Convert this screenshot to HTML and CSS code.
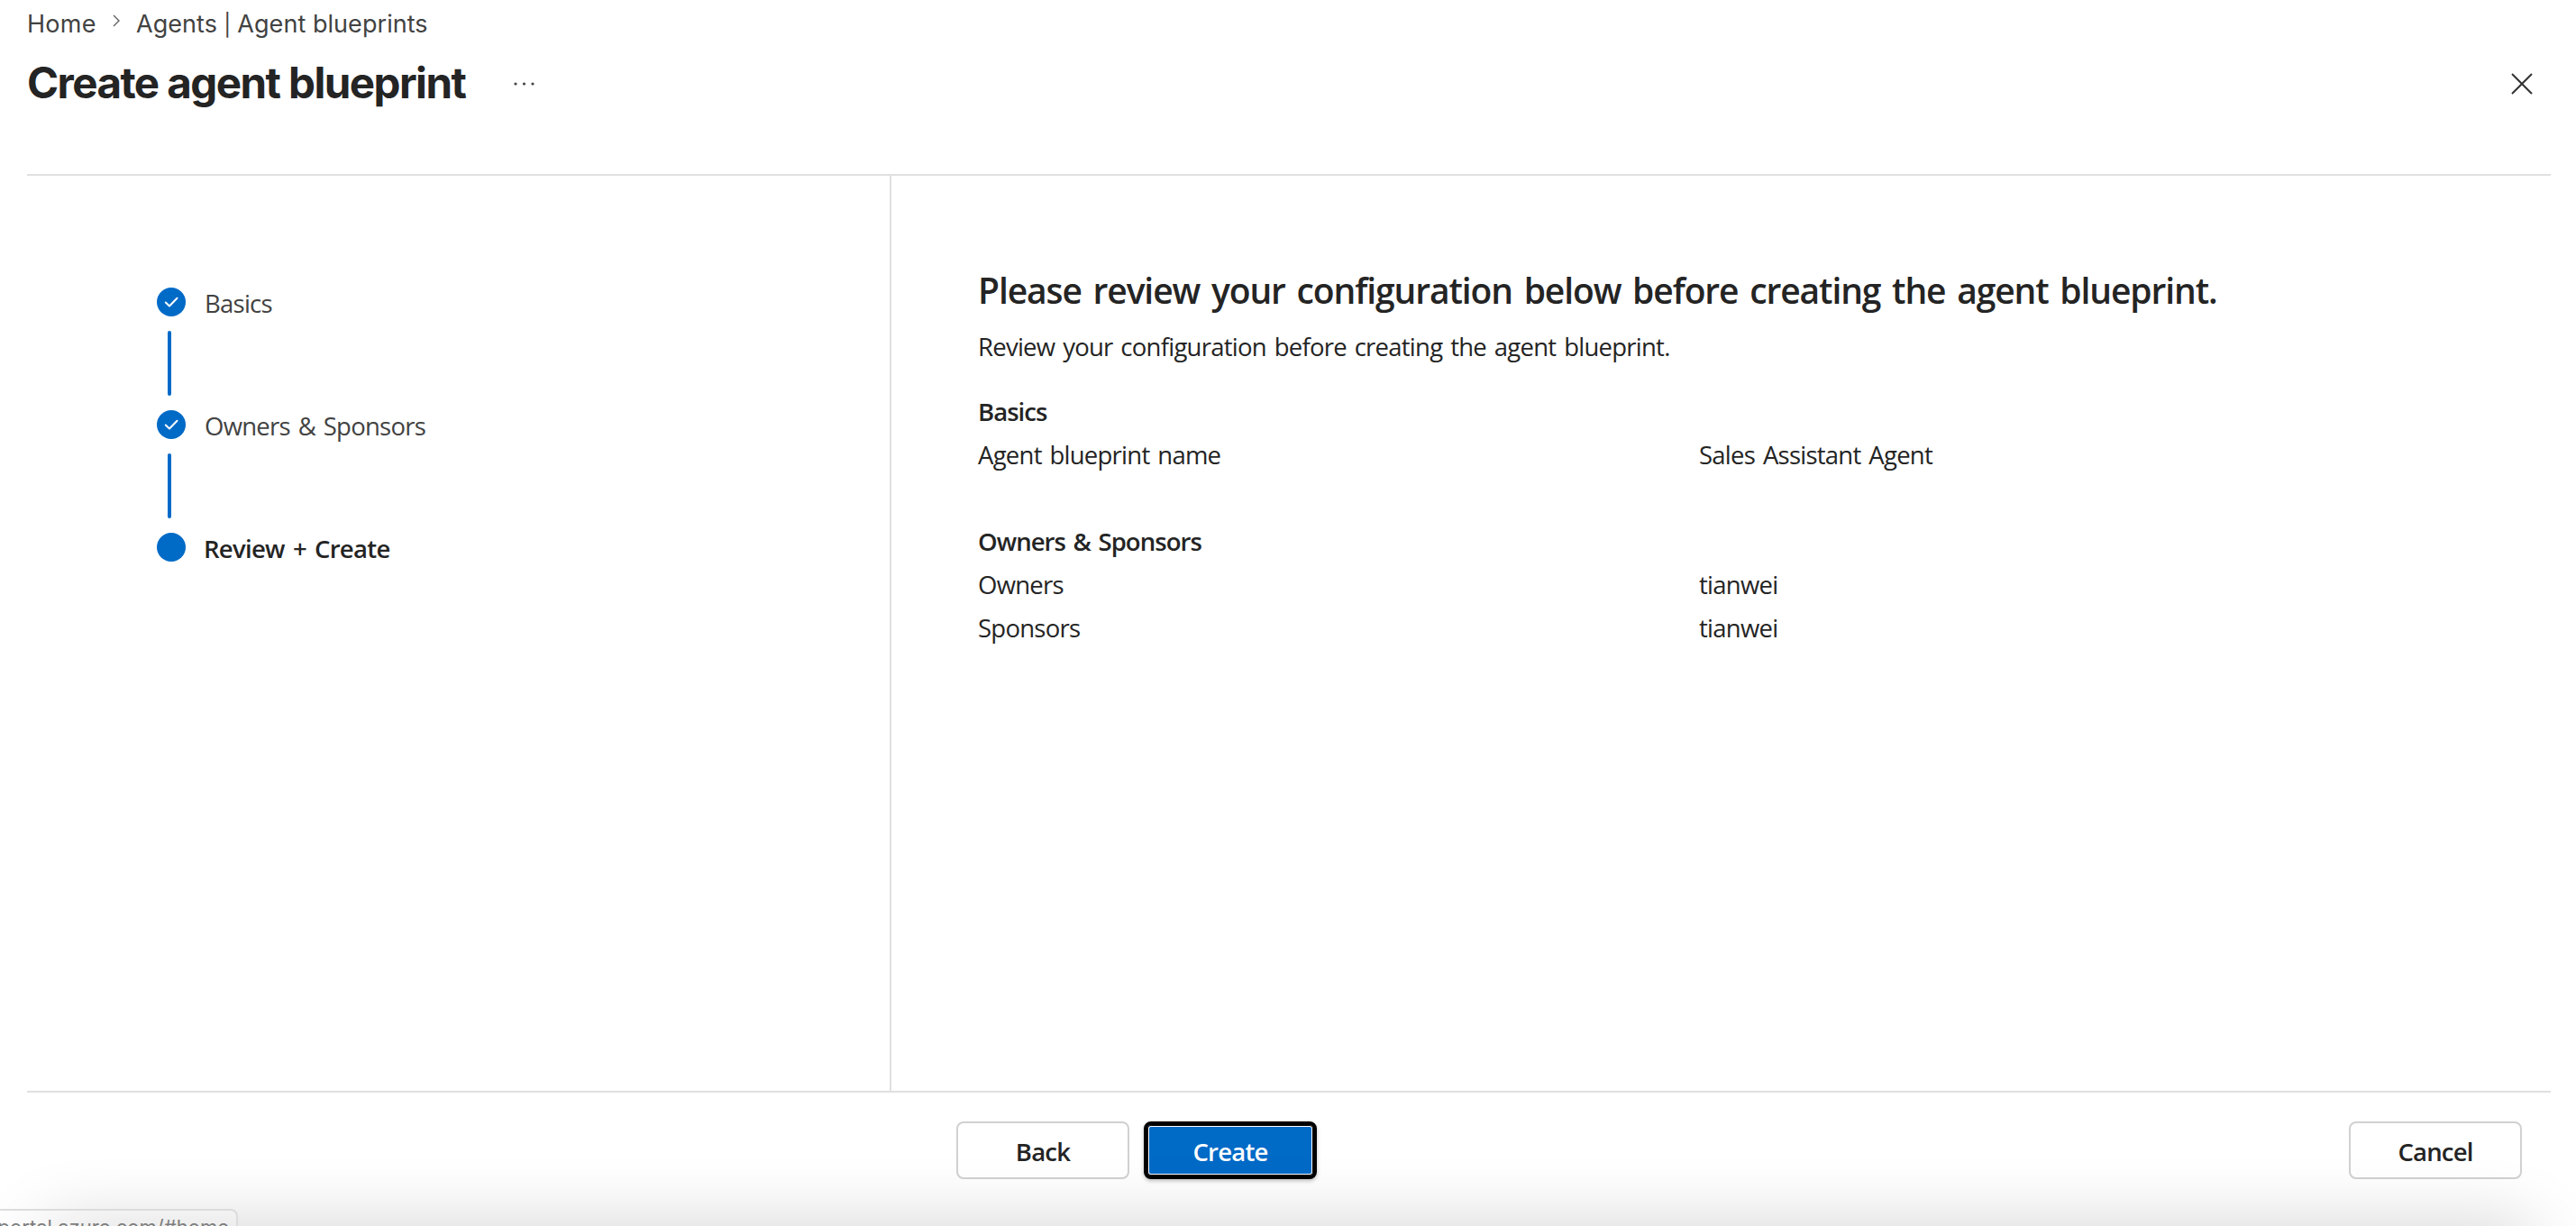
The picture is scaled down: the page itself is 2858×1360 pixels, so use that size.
FILE: index.html
```
<!DOCTYPE html>
<html lang="en">

<head>
    <meta charset="UTF-8">
    <meta name="viewport" content="width=device-width, initial-scale=1.0">
    <title>Create agent blueprint</title>
    <link rel="stylesheet" href="styles.css">
</head>

<body>
    <div class="page">
        <header class="header">
            <nav class="breadcrumb">
                <a href="#home" class="crumb-home">Home</a>
                <svg class="chevron" viewBox="0 0 8 14"><path d="M1 1l6 6-6 6" /></svg>
                <a href="#agents" class="crumb-agents">Agents <span class="pipe">|</span> Agent blueprints</a>
            </nav>
            <div class="title-row">
                <h1>Create agent blueprint</h1>
                <svg class="more" viewBox="0 0 24 4">
                    <circle cx="2" cy="2" r="1.6" />
                    <circle cx="11.5" cy="2" r="1.6" />
                    <circle cx="21" cy="2" r="1.6" />
                </svg>
                <svg class="close" viewBox="0 0 24 24"><path d="M1 1l22 22M23 1L1 23" /></svg>
            </div>
        </header>

        <main class="wizard">
            <aside class="steps">
                <div class="step">
                    <span class="dot"><svg viewBox="0 0 32 32"><path d="M9.8 16.5l4.2 4 8.5-8.8" /></svg></span>
                    <span class="step-label">Basics</span>
                </div>
                <div class="connector"></div>
                <div class="step">
                    <span class="dot"><svg viewBox="0 0 32 32"><path d="M9.8 16.5l4.2 4 8.5-8.8" /></svg></span>
                    <span class="step-label">Owners &amp; Sponsors</span>
                </div>
                <div class="connector"></div>
                <div class="step current">
                    <span class="dot"></span>
                    <span class="step-label">Review + Create</span>
                </div>
            </aside>

            <section class="review">
                <h2>Please review your configuration below before creating the agent blueprint.</h2>
                <p class="intro">Review your configuration before creating the agent blueprint.</p>

                <h3>Basics</h3>
                <div class="row">
                    <span>Agent blueprint name</span>
                    <span>Sales Assistant Agent</span>
                </div>

                <h3 class="second">Owners &amp; Sponsors</h3>
                <div class="row">
                    <span>Owners</span>
                    <span>tianwei</span>
                </div>
                <div class="row">
                    <span>Sponsors</span>
                    <span>tianwei</span>
                </div>
            </section>
        </main>

        <footer class="footer">
            <button class="btn">Back</button>
            <button class="btn primary">Create</button>
            <button class="btn cancel">Cancel</button>
        </footer>
    </div>

    <div class="bottom-shade"></div>
    <div class="status-bar">https://portal.azure.com/#home</div>
</body>

</html>
```

FILE: styles.css
```
* {
    box-sizing: border-box;
}

body {
    margin: 0;
    height: 1360px;
    position: relative;
    overflow: hidden;
    background-color: #fff;
    color: #242424;
    font-family: "Segoe UI", "Open Sans", "Noto Sans", sans-serif;
    font-size: 27.5px;
    letter-spacing: -0.75px;
    word-spacing: 2.4px;
}

.page {
    display: flex;
    flex-direction: column;
    height: 1360px;
    padding: 0 28px 0 30px;
}

.header {
    height: 193px;
    font-family: Inter, sans-serif;
    word-spacing: 0;
}

.breadcrumb {
    display: flex;
    align-items: center;
    height: 52px;
    font-size: 27px;
    letter-spacing: 0.05px;
}

.breadcrumb a {
    color: #424242;
    text-decoration: none;
    white-space: nowrap;
}

.crumb-home {
    width: 95px;
    letter-spacing: 0.3px;
}

.crumb-agents {
    margin-left: 18px;
}

.pipe {
    font-size: 24px;
    margin: 0 -0.5px;
}

.chevron {
    width: 8px;
    height: 14px;
    margin-top: -6px;
    fill: none;
    stroke: #616161;
    stroke-width: 1.4;
}

.title-row {
    display: flex;
    align-items: center;
    height: 82px;
}

h1 {
    width: 540px;
    margin: -3px 0 0;
    font-size: 47.5px;
    font-weight: 650;
    letter-spacing: -1.55px;
    white-space: nowrap;
}

.more {
    width: 24px;
    height: 4px;
    fill: #424242;
}

.close {
    width: 24px;
    height: 24px;
    margin-left: auto;
    margin-right: 20px;
    fill: none;
    stroke: #333;
    stroke-width: 2;
}

.wizard {
    display: flex;
    height: 1019px;
    border-top: 2px solid #e0e0e0;
    border-bottom: 2px solid #e0e0e0;
}

.steps {
    width: 959px;
    padding: 124px 0 0 144px;
    border-right: 2px solid #e0e0e0;
}

.step {
    display: flex;
    align-items: center;
    gap: 21px;
    height: 32px;
    color: #424242;
}

.step-label {
    line-height: 32px;
    padding-top: 4px;
}

.dot {
    width: 32px;
    height: 32px;
    border-radius: 50%;
    background-color: #006ac7;
}

.dot svg {
    display: block;
    fill: none;
    stroke: #fff;
    stroke-width: 2;
    stroke-linecap: round;
    stroke-linejoin: round;
}

.connector {
    width: 4px;
    height: 72px;
    margin: 16px 0 16px 12px;
    border-radius: 2px;
    background-color: #006ac7;
}

.current {
    gap: 20px;
    color: #242424;
    font-weight: 600;
    letter-spacing: -0.7px;
    word-spacing: 2.6px;
}

.review {
    flex: 1;
    padding: 99px 0 0 96px;
}

h2 {
    margin: 0;
    font-size: 39px;
    font-weight: 600;
    line-height: 56px;
    letter-spacing: -1.1px;
    word-spacing: 3.7px;
}

.intro {
    margin: 11px 0 24px;
    line-height: 48px;
}

h3 {
    margin: 0;
    font-size: 27.5px;
    font-weight: 600;
    line-height: 48px;
    letter-spacing: -0.95px;
}

.second {
    margin-top: 48px;
}

.row {
    display: grid;
    grid-template-columns: 800px 1fr;
    line-height: 48px;
}

.footer {
    display: flex;
    gap: 16px;
    padding: 32px 32px 0 1031px;
}

.btn {
    width: 192px;
    height: 64px;
    padding: 3px 0 0;
    border: 2px solid #d1d1d1;
    border-radius: 8px;
    background-color: #fff;
    color: #242424;
    font-family: inherit;
    font-size: 27.5px;
    font-weight: 600;
    letter-spacing: -0.8px;
}

.primary {
    border: 4px solid #000;
    background-color: #006ac7;
    color: #fff;
    box-shadow: inset 0 0 0 1px #000, inset 0 0 0 2px #fff, 0 2px 4px rgba(0, 0, 0, 0.25);
}

.cancel {
    margin-left: auto;
}

/* shadow rising from below the window */
.bottom-shade {
    position: absolute;
    left: 50px;
    right: 50px;
    top: 1362px;
    height: 60px;
    box-shadow: 0 0 80px rgba(0, 0, 0, 0.2);
}

.status-bar {
    position: absolute;
    right: 2594px;
    top: 1341px;
    padding: 4px 8px 0 0;
    height: 40px;
    border: 2px solid #dcdcdc;
    border-radius: 0 8px 0 0;
    background-color: rgba(255, 255, 255, 0.2);
    color: #7d7d7d;
    font-family: Inter, sans-serif;
    font-size: 22px;
    letter-spacing: 0;
    line-height: 28px;
    white-space: nowrap;
}
```
